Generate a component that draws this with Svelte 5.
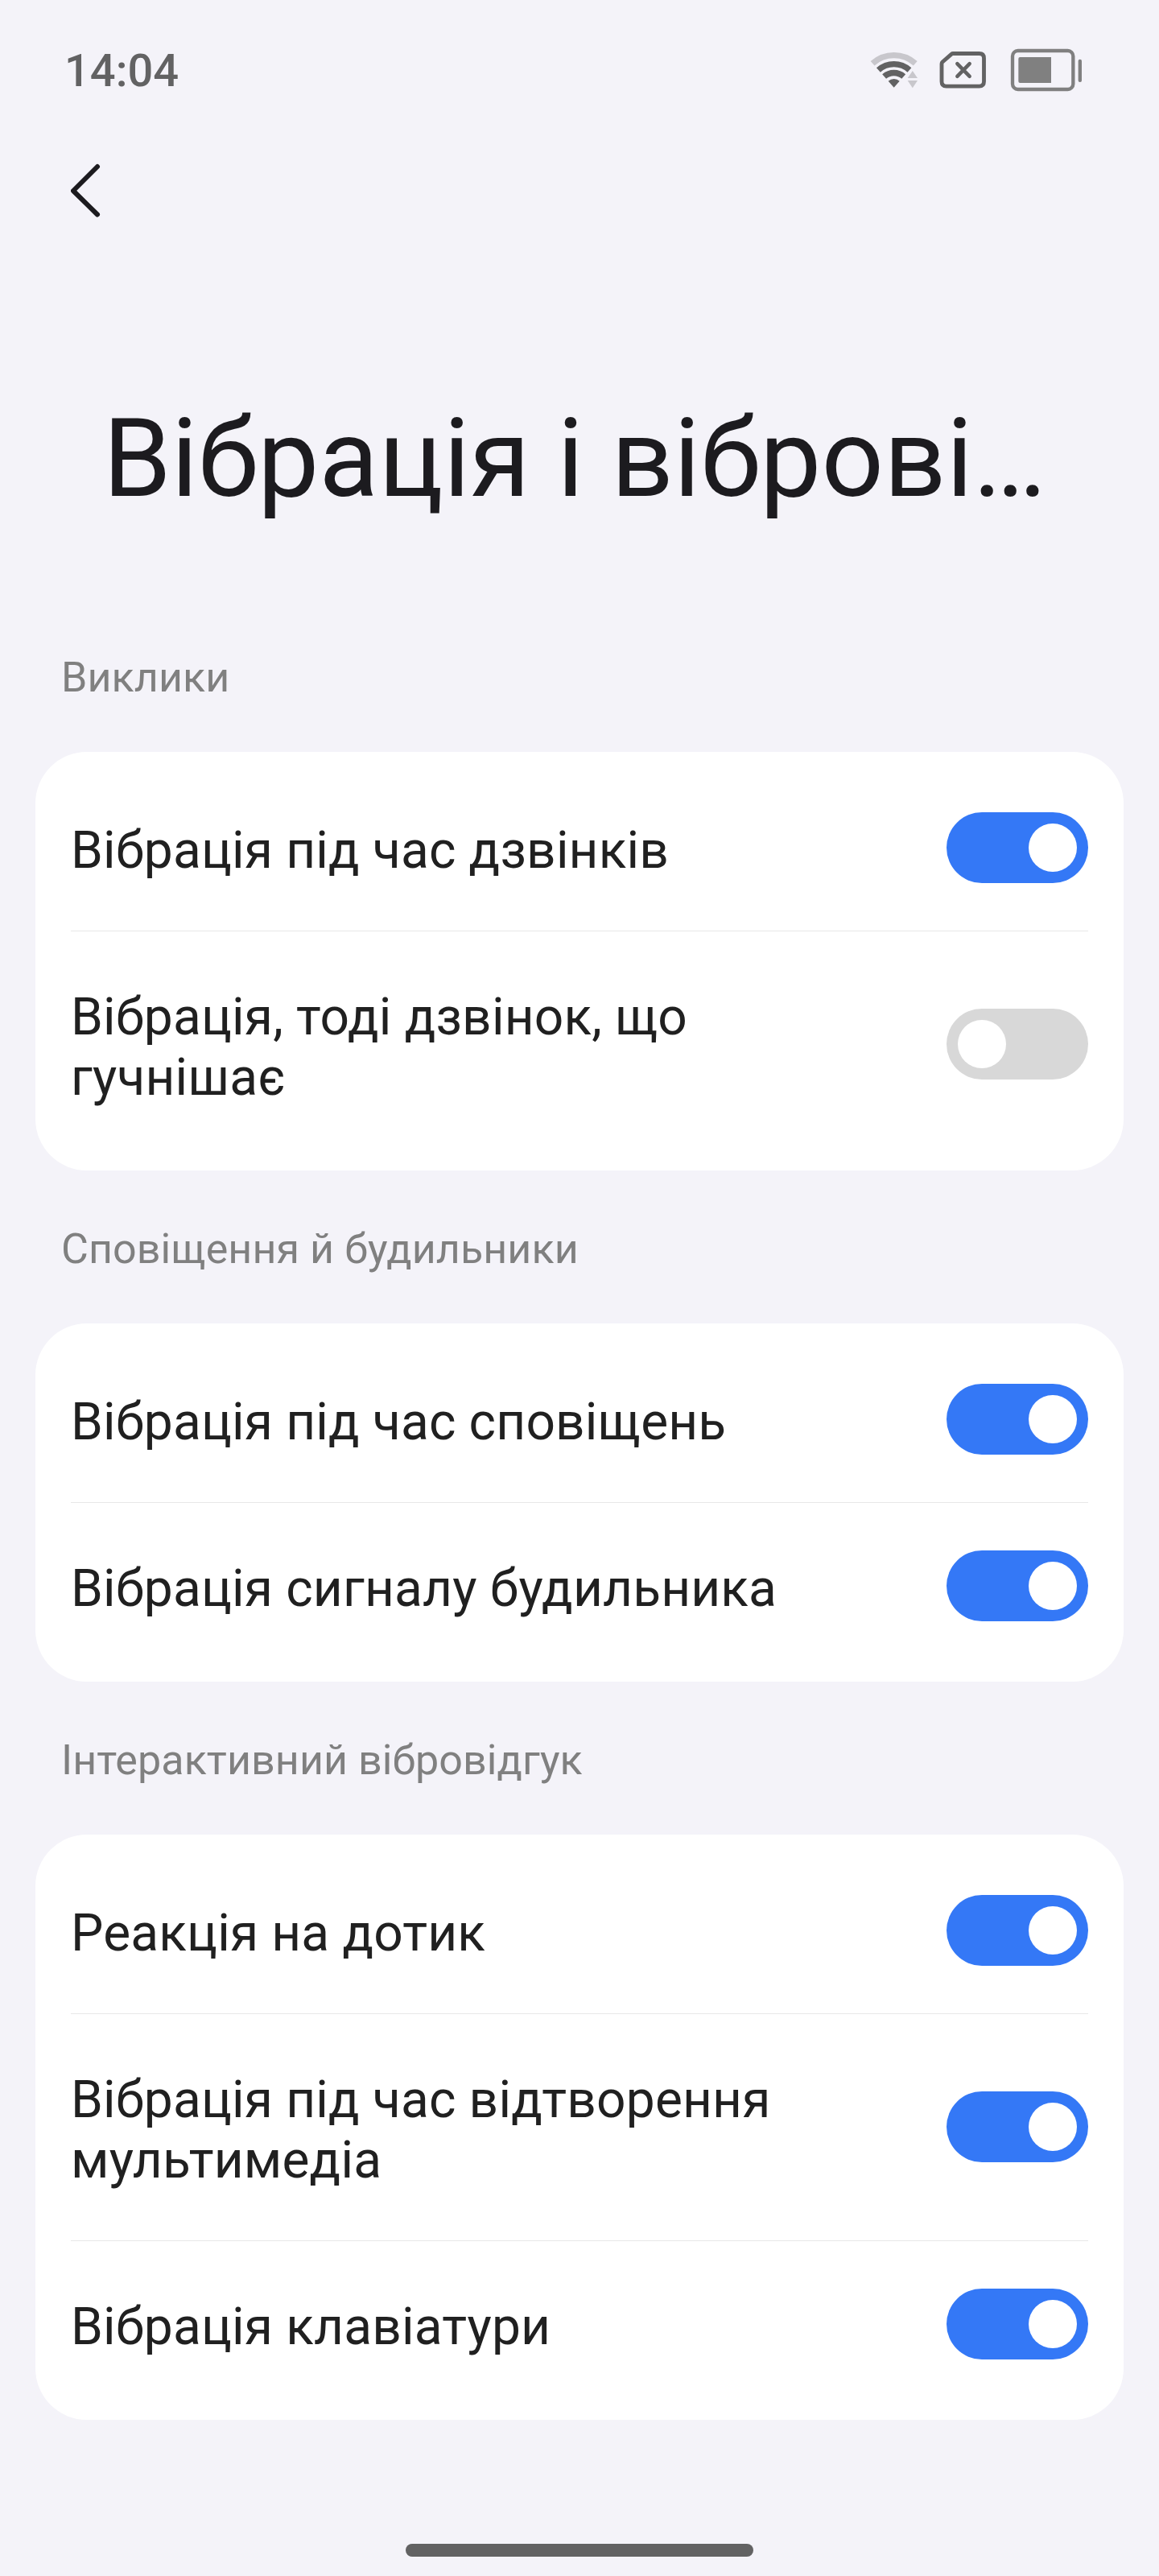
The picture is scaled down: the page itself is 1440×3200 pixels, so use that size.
<!-- Vibration and haptics settings screen. -->

<script>
	// Status bar clock.
	const Time = "14:04"

	// Screen title, already shortened to one line.
	const Title = "Вібрація і віброві…"

	// Settings, grouped by section.
	let Sections = $state([
		{
			Name: "Виклики",
			Items: [
				{ Text: "Вібрація під час дзвінків", On: true },
				{ Text: "Вібрація, тоді дзвінок, що гучнішає", On: false }
			]
		},
		{
			Name: "Сповіщення й будильники",
			Items: [
				{ Text: "Вібрація під час сповіщень", On: true },
				{ Text: "Вібрація сигналу будильника", On: true }
			]
		},
		{
			Name: "Інтерактивний вібровідгук",
			Items: [
				{ Text: "Реакція на дотик", On: true },
				{ Text: "Вібрація під час відтворення мультимедіа", On: true },
				{ Text: "Вібрація клавіатури", On: true }
			]
		}
	])

	// Turn a setting on or off.
	function Toggle(Item) {
		Item.On = !Item.On
	}
</script>

<div class="screen">
	<!-- Status bar. -->
	<header class="status">
		<span class="clock">{Time}</span>

		<div class="icons">
			<!-- Wi-Fi. -->
			<svg class="wifi" width="60" height="48" viewBox="60 72 180 144" fill="none">
				<path d="M72.3 119.2A120 120 0 0 1 231.7 119.2" stroke="#c8c7cc" stroke-width="22" />
				<path d="M94.2 143.9A87 87 0 0 1 209.8 143.9" stroke="#626263" stroke-width="22" />
				<path d="M115.8 168.2A54.5 54.5 0 0 1 188.2 168.2" stroke="#626263" stroke-width="22" />
				<path d="M152 209L131 185A32 32 0 0 1 173 185Z" fill="#626263" />
				<path d="M221.500 147L240 174H203ZM203 183H240L221.500 211Z" fill="#c8c7cc" />
			</svg>

			<!-- No SIM card. -->
			<svg class="sim" width="58" height="48" viewBox="322 72 174 144" fill="none" stroke="#626263">
				<path d="M373 82.500H471Q488.500 82.500 488.500 100V187Q488.500 204.500 471 204.500H348Q331 204.500 331 187V121Q331 117 334 114L367 85Q370 82.500 373 82.500Z" stroke-width="14.500" />
				<path d="M389 120.500L435 167.500M435 120.500L389 167.500" stroke-width="13.500" stroke-linecap="round" />
			</svg>

			<!-- Battery. -->
			<svg class="battery" width="90" height="54" viewBox="585 60 270 162" fill="none">
				<rect x="594" y="69" width="226" height="144" rx="20" stroke="#808080" stroke-width="13" />
				<path d="M622 93H738V189H622Q616 189 616 183V99Q616 93 622 93Z" fill="#808080" />
				<rect x="839" y="101" width="13" height="85" rx="6" fill="#808080" />
			</svg>
		</div>
	</header>

	<!-- Back button. -->
	<nav class="toolbar">
		<button class="back" aria-label="Назад">
			<svg width="40" height="70" viewBox="0 0 40 70" fill="none" stroke="#1c1b1f" stroke-width="6" stroke-linecap="round" stroke-linejoin="round">
				<path d="M33 5L3 35L33 64.500" />
			</svg>
		</button>
	</nav>

	<h1>{Title}</h1>

	<!-- List of settings. -->
	{#each Sections as Section}
		<h2>{Section.Name}</h2>

		<section class="card">
			{#each Section.Items as Item}
				<div class="row">
					<span class="text">{Item.Text}</span>
					<button class="switch" class:on={Item.On} role="switch" aria-checked={Item.On} aria-label={Item.Text} onclick={() => Toggle(Item)}>
						<span class="knob"></span>
					</button>
				</div>
			{/each}
		</section>
	{/each}

	<!-- Gesture bar. -->
	<footer><div class="handle"></div></footer>
</div>

<style>
	:global(body) {
		margin: 0;
		background: #f4f3f9;
	}

	.screen {
		display: flex;
		flex-direction: column;
		box-sizing: border-box;
		width: 1440px;
		height: 3200px;
		background: #f4f3f9;
		font-family: Roboto, sans-serif;
		color: #202020;
	}

	button {
		border: 0;
		padding: 0;
		background: none;
		cursor: pointer;
	}

	/* Status bar. */
	.status {
		display: flex;
		justify-content: space-between;
		align-items: center;
		height: 174px;
		padding: 0 95px 0 80px;
	}

	.clock {
		padding-top: 2px;
		font-size: 56px;
		line-height: 66px;
		font-weight: 500;
		color: #626263;
	}

	.icons {
		display: flex;
		align-items: center;
	}

	.icons svg {
		display: block;
	}

	.sim {
		margin: 0 30px 0 27px;
	}

	/* Toolbar. */
	.toolbar {
		display: flex;
		align-items: center;
		height: 126px;
		padding-left: 88px;
	}

	.back svg {
		display: block;
	}

	/* Titles. */
	h1 {
		margin: 190px 128px 0;
		font-size: 136px;
		line-height: 160px;
		font-weight: 400;
		color: #1c1b1f;
		white-space: nowrap;
	}

	h2 {
		margin: 67px 76px 62px;
		font-size: 52px;
		line-height: 61px;
		font-weight: 400;
		letter-spacing: 0.08px;
		color: #808080;
	}

	h1 + h2 {
		margin-top: 161px;
	}

	/* Cards. */
	.card {
		margin: 0 44px;
		padding: 16px 44px;
		border-radius: 64px;
		background: #fff;
	}

	.row {
		display: flex;
		justify-content: space-between;
		align-items: center;
		min-height: 206px;
	}

	.row + .row {
		border-top: 1px solid #e8e8e8;
	}

	.text {
		width: 960px;
		padding: 69px 0 62px;
		font-size: 64px;
		line-height: 75px;
		letter-spacing: 0.18px;
	}

	/* Switch. */
	.switch {
		display: flex;
		align-items: center;
		box-sizing: border-box;
		width: 176px;
		height: 88px;
		margin-bottom: 0.5px;
		padding: 0 14px;
		border-radius: 44px;
		background: #d8d8d8;
	}

	.switch.on {
		justify-content: flex-end;
		background: #3478f6;
	}

	.knob {
		width: 60px;
		height: 60px;
		border-radius: 50%;
		background: #fff;
	}

	/* Gesture bar. */
	footer {
		display: flex;
		justify-content: center;
		margin-top: auto;
		padding-bottom: 24px;
	}

	.handle {
		width: 432px;
		height: 16px;
		border-radius: 8px;
		background: #626263;
	}
</style>
